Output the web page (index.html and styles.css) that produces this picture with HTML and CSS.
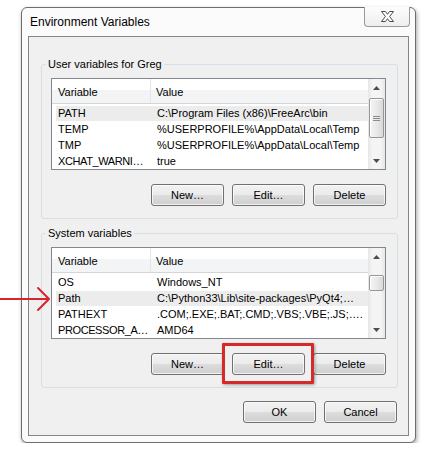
FILE: index.html
```html
<!DOCTYPE html>
<html lang="en">
<head>
    <meta charset="UTF-8">
    <meta name="viewport" content="width=device-width, initial-scale=1.0">
    <title>Environment Variables</title>
    <link rel="stylesheet" href="styles.css">
</head>
<body>
    <div class="window">
        <div class="titlebar">
            <span class="title">Environment Variables</span>
            <button class="close-btn">
                <svg width="13" height="11" viewBox="0 0 13 11">
                    <polygon points="0.5,0.5 4.5,0.5 6.5,3.3 8.5,0.5 12.5,0.5 8.6,5.5 12.5,10.5 8.5,10.5 6.5,7.7 4.5,10.5 0.5,10.5 4.4,5.5" fill="#fff" stroke="#4b4b4b" stroke-width="1"/>
                </svg>
            </button>
        </div>

        <div class="client">
            <fieldset class="group">
                <legend>User variables for Greg</legend>
                <div class="listview">
                    <div class="list-main">
                        <div class="list-header">
                            <span class="col-var">Variable</span>
                            <span class="col-val">Value</span>
                        </div>
                        <div class="list-rows">
                            <div class="list-row selected"><span class="col-var">PATH</span><span class="col-val">C:\Program Files (x86)\FreeArc\bin</span></div>
                            <div class="list-row"><span class="col-var">TEMP</span><span class="col-val">%USERPROFILE%\AppData\Local\Temp</span></div>
                            <div class="list-row"><span class="col-var">TMP</span><span class="col-val">%USERPROFILE%\AppData\Local\Temp</span></div>
                            <div class="list-row"><span class="col-var narrow">XCHAT_WARNI…</span><span class="col-val">true</span></div>
                        </div>
                    </div>
                    <div class="scrollbar">
                        <div class="arrow up"><svg width="7" height="4" viewBox="0 0 7 4"><polygon points="3.5,0 7,4 0,4" fill="#4d4d4d"/></svg></div>
                        <div class="track">
                            <div class="thumb thumb-user"><span class="grip"></span></div>
                        </div>
                        <div class="arrow down"><svg width="7" height="4" viewBox="0 0 7 4"><polygon points="0,0 7,0 3.5,4" fill="#4d4d4d"/></svg></div>
                    </div>
                </div>
                <div class="button-row">
                    <button class="btn">New…</button>
                    <button class="btn">Edit…</button>
                    <button class="btn">Delete</button>
                </div>
            </fieldset>

            <fieldset class="group">
                <legend>System variables</legend>
                <div class="listview">
                    <div class="list-main">
                        <div class="list-header">
                            <span class="col-var">Variable</span>
                            <span class="col-val">Value</span>
                        </div>
                        <div class="list-rows">
                            <div class="list-row"><span class="col-var">OS</span><span class="col-val">Windows_NT</span></div>
                            <div class="list-row selected"><span class="col-var">Path</span><span class="col-val">C:\Python33\Lib\site-packages\PyQt4;…</span></div>
                            <div class="list-row"><span class="col-var">PATHEXT</span><span class="col-val">.COM;.EXE;.BAT;.CMD;.VBS;.VBE;.JS;….</span></div>
                            <div class="list-row"><span class="col-var narrow">PROCESSOR_A…</span><span class="col-val">AMD64</span></div>
                        </div>
                    </div>
                    <div class="scrollbar">
                        <div class="arrow up"><svg width="7" height="4" viewBox="0 0 7 4"><polygon points="3.5,0 7,4 0,4" fill="#4d4d4d"/></svg></div>
                        <div class="track">
                            <div class="thumb thumb-system"></div>
                        </div>
                        <div class="arrow down"><svg width="7" height="4" viewBox="0 0 7 4"><polygon points="0,0 7,0 3.5,4" fill="#4d4d4d"/></svg></div>
                    </div>
                </div>
                <div class="button-row">
                    <button class="btn">New…</button>
                    <button class="btn">Edit…</button>
                    <button class="btn">Delete</button>
                </div>
            </fieldset>

            <div class="dialog-buttons">
                <button class="btn">OK</button>
                <button class="btn">Cancel</button>
            </div>
        </div>
    </div>

    <!-- annotation overlays -->
    <div class="highlight-box"></div>
    <svg class="pointer-arrow" width="54" height="28" viewBox="0 0 54 28">
        <g fill="none" stroke="#d7262b" stroke-width="2" stroke-linecap="round" stroke-linejoin="round">
            <line x1="0" y1="13" x2="48" y2="13"/>
            <polyline points="38,2 49,13 38,24"/>
        </g>
    </svg>
</body>
</html>
```

FILE: styles.css
```css
body {
    margin: 0;
    background-color: #fff;
    font-family: "Liberation Sans", Arial, sans-serif;
    font-size: 11px;
    color: #000;
}
.window {
    box-sizing: border-box;
    width: 395px;
    height: 436px;
    margin: 7px 0 0 21px;
    background: #fbfbfb;
    border: 1px solid #6e6e6e;
    border-radius: 6px;
    box-shadow: 1px 2px 4px rgba(0, 0, 0, 0.35);
    padding: 0 6px;
}
.titlebar {
    display: flex;
    align-items: flex-start;
    height: 28px;
}
.title {
    font-size: 12px;
    line-height: 28px;
    padding-left: 2px;
    flex: 1;
}
.close-btn {
    box-sizing: border-box;
    width: 46px;
    height: 20px;
    margin: -1px -1px 0 0;
    padding: 0;
    border: 1px solid #9a9a9a;
    border-top: none;
    border-radius: 0 0 4px 4px;
    background: linear-gradient(#fdfdfd, #eeeeee);
    display: flex;
    align-items: center;
    justify-content: center;
}
.client {
    box-sizing: border-box;
    height: 400px;
    background: #f0f0f0;
    border: 1px solid #858585;
    padding-top: 20px;
}
.group {
    box-sizing: border-box;
    height: 162px;
    margin: 0 10px 7px 12px;
    padding: 7px 11px 0 9px;
    border: 1px solid #d5dfe5;
    border-radius: 3px;
}
.group legend {
    font-size: 11px;
    line-height: 14px;
    padding: 0 2px;
    margin-left: -5px;
}
.listview {
    box-sizing: border-box;
    display: flex;
    height: 92px;
    border: 1px solid #828790;
    background: #fff;
}
.list-main {
    flex: 1;
    overflow: hidden;
}
.list-header {
    display: flex;
    box-sizing: border-box;
    height: 25px;
    align-items: center;
    background: linear-gradient(#fff 0, #fff 45%, #f3f4f6 45%, #f3f4f6 100%);
    border-bottom: 1px solid #d5d5d5;
}
.list-header .col-var {
    box-sizing: border-box;
    width: 99px;
    height: 24px;
    line-height: 24px;
    padding: 1px 0 0 6px;
    border-right: 1px solid #e3e5e8;
}
.list-header .col-val {
    padding: 1px 0 0 5px;
}
.list-rows {
    padding-top: 1px;
}
.list-row {
    display: flex;
    height: 15px;
    line-height: 15px;
    margin: 1px 0 1px 4px;
    white-space: nowrap;
}
.list-row.selected {
    background-color: #ececec;
}
.list-row .col-var {
    box-sizing: border-box;
    width: 95px;
    padding-left: 2px;
}
.list-row .narrow {
    letter-spacing: -0.4px;
}
.list-row .col-val {
    padding-left: 6px;
}
.scrollbar {
    width: 17px;
    display: flex;
    flex-direction: column;
    background: linear-gradient(to right, #e6e6e6, #f4f4f4 25%, #f4f4f4 75%, #e6e6e6);
}
.arrow {
    height: 17px;
    display: flex;
    align-items: center;
    justify-content: center;
}
.track {
    flex: 1;
    padding: 0 1px;
}
.thumb {
    box-sizing: border-box;
    border: 1px solid #979797;
    border-radius: 2px;
    background: linear-gradient(to right, #f6f6f6, #e9e9e9 50%, #d9d9d9);
    box-shadow: inset 1px 1px 0 #fff;
    display: flex;
    align-items: center;
    justify-content: center;
}
.thumb-user {
    height: 40px;
    margin-top: 2px;
}
.thumb-system {
    height: 16px;
    margin-top: 10px;
}
.grip {
    width: 7px;
    height: 5px;
    background: repeating-linear-gradient(#8c8c8c 0, #8c8c8c 1px, transparent 1px, transparent 2px);
}
.button-row {
    display: flex;
    justify-content: flex-end;
    gap: 8px;
    margin-top: 14px;
}
.btn {
    box-sizing: border-box;
    width: 73px;
    height: 22px;
    padding: 0;
    font-family: "Liberation Sans", Arial, sans-serif;
    font-size: 11px;
    color: #000;
    border: 1px solid #707070;
    border-radius: 3px;
    background: linear-gradient(#f2f2f2 0, #ebebeb 50%, #dddddd 50%, #cfcfcf 100%);
    box-shadow: inset 0 0 0 1px rgba(255, 255, 255, 0.7);
}
.dialog-buttons {
    display: flex;
    justify-content: flex-end;
    gap: 8px;
    margin: 13px 11px 0 0;
}
.highlight-box {
    position: absolute;
    left: 222px;
    top: 343px;
    width: 92px;
    height: 41px;
    box-sizing: border-box;
    border: 3px solid #d42a2a;
    border-radius: 1px;
    box-shadow: 1px 1px 3px rgba(0, 0, 0, 0.35);
}
.pointer-arrow {
    position: absolute;
    left: 0;
    top: 286px;
}
```
